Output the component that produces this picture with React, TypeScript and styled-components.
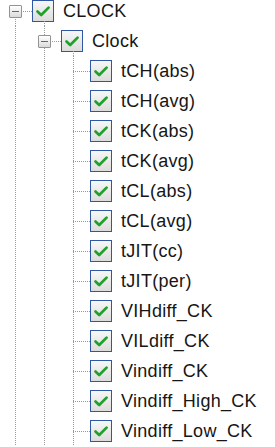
import React from "react"
import styled, { createGlobalStyle } from "styled-components"

type TreeNode = {
    label: string
    children?: TreeNode[]
}

const data: TreeNode[] = [
    {
        label: "CLOCK",
        children: [
            {
                label: "Clock",
                children: [
                    "tCH(abs)", "tCH(avg)", "tCK(abs)", "tCK(avg)", "tCL(abs)", "tCL(avg)",
                    "tJIT(cc)", "tJIT(per)", "VIHdiff_CK", "VILdiff_CK", "Vindiff_CK",
                    "Vindiff_High_CK", "Vindiff_Low_CK",
                ].map(label => ({ label })),
            },
        ],
    },
]

type FlatRow = {
    node: TreeNode
    guides: boolean[]
    isRoot: boolean
    isFirst: boolean
    hasNext: boolean
}

function flatten(nodes: TreeNode[], guides: boolean[], out: FlatRow[]) {
    nodes.forEach((node, i) => {
        out.push({ node, guides, isRoot: guides.length === 0, isFirst: i === 0, hasNext: true })
        if (node.children) flatten(node.children, [...guides, true], out)
    })
    return out
}

const dotsV = `repeating-linear-gradient(to bottom, #9a9a9a 0 1px, transparent 1px 2px)`
const dotsH = `repeating-linear-gradient(to right, #9a9a9a 0 1px, transparent 1px 2px)`

function CheckMark() {
    return (
        <svg width="22" height="22" viewBox="0 0 22 22">
            <path d="M5.5 11.5 L9.2 15 L16.6 7.6" fill="none" stroke="#1fa12b" strokeWidth="2.7" strokeLinecap="round" strokeLinejoin="round" />
        </svg>
    )
}

export default function App() {
    const rows = flatten(data, [], [])
    return (
        <>
            <GlobalStyle />
            <Tree>
                {rows.map((r, i) => (
                    <Row key={i}>
                        {r.guides.map((g, j) => <Guide key={j} $line={g} />)}
                        <Connector $noTop={r.isRoot && r.isFirst} $noBottom={!r.hasNext}>
                            {r.node.children && <Expander />}
                        </Connector>
                        <CheckBox $stem={!!r.node.children}>
                            <CheckMark />
                        </CheckBox>
                        <Label>{r.node.label}</Label>
                    </Row>
                ))}
            </Tree>
        </>
    )
}

const GlobalStyle = createGlobalStyle`
    html, body {
        margin: 0;
        background: #ffffff;
        overflow: hidden;
    }
`

const Tree = styled.div`
    margin-top: -4px;
    display: flex;
    flex-direction: column;
    font-family: "Liberation Sans", Arial, sans-serif;
`

const Row = styled.div`
    display: flex;
    align-items: center;
    height: 30px;
`

const Guide = styled.div<{ $line: boolean }>`
    position: relative;
    width: 29px;
    height: 100%;
    flex: none;
    &::before {
        content: "";
        display: ${p => (p.$line ? "block" : "none")};
        position: absolute;
        left: 15px;
        top: 0;
        bottom: 0;
        width: 1px;
        background: ${dotsV};
    }
`

const Connector = styled.div<{ $noTop: boolean; $noBottom: boolean }>`
    position: relative;
    width: 29px;
    height: 100%;
    flex: none;
    &::before {
        content: "";
        position: absolute;
        left: 15px;
        top: ${p => (p.$noTop ? "15px" : "0")};
        bottom: ${p => (p.$noBottom ? "15px" : "0")};
        width: 1px;
        background: ${dotsV};
    }
    &::after {
        content: "";
        position: absolute;
        left: 15px;
        right: -3px;
        top: 15px;
        height: 1px;
        background: ${dotsH};
    }
`

const Expander = styled.div`
    position: absolute;
    z-index: 1;
    left: 9px;
    top: 9px;
    width: 11px;
    height: 11px;
    border: 1px solid #939393;
    border-radius: 1px;
    background: linear-gradient(to bottom, #ffffff, #dadada);
    &::before {
        content: "";
        position: absolute;
        left: 2px;
        right: 2px;
        top: 5px;
        height: 1px;
        background: #51689c;
    }
`

const CheckBox = styled.div<{ $stem: boolean }>`
    position: relative;
    box-sizing: border-box;
    margin-left: 3px;
    width: 22px;
    height: 22px;
    flex: none;
    border: 1px solid #2f57a4;
    background: linear-gradient(to bottom, #f7f7f7, #dcdcdc);
    svg {
        position: absolute;
        left: -1px;
        top: -1px;
    }
    &::after {
        content: "";
        display: ${p => (p.$stem ? "block" : "none")};
        position: absolute;
        left: 11px;
        top: 100%;
        height: 5px;
        width: 1px;
        background: ${dotsV};
    }
`

const Label = styled.span`
    margin-left: 9px;
    font-size: 18px;
    letter-spacing: 0.3px;
    color: #161616;
    white-space: nowrap;
`
